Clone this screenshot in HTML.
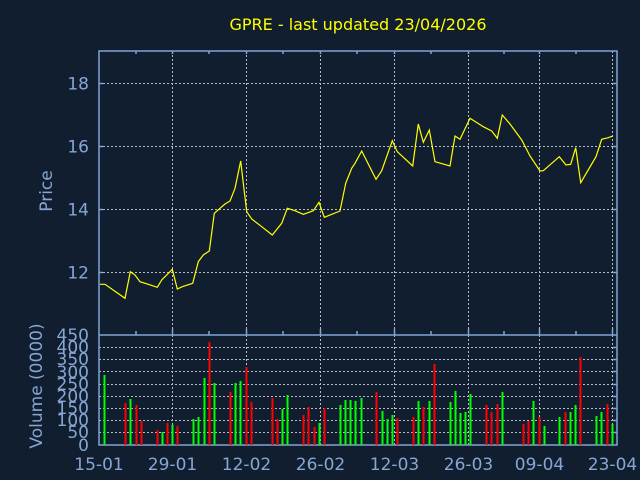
<!DOCTYPE html>
<html><head><meta charset="utf-8"><style>
html,body{margin:0;padding:0;background:#111e2f;}
svg{display:block;}
text{font-family:"DejaVu Sans","Liberation Sans",sans-serif;}
</style></head><body>
<svg width="640" height="480" viewBox="0 0 640 480" xmlns="http://www.w3.org/2000/svg">
<rect width="640" height="480" fill="#111e2f"/>
<text x="358" y="30" fill="#ffff00" font-size="16" text-anchor="middle">GPRE - last updated 23/04/2026</text>
<g stroke="#b8bcc4" stroke-width="1" stroke-dasharray="2,2" fill="none">
<path d="M99 83.5H617M99 146.5H617M99 209.5H617M99 272.5H617"/>
<path d="M172.5 51V445M246.5 51V445M320.5 51V445M394.5 51V445M468.5 51V445M539.5 51V445M612.5 51V445"/>
<path d="M99 347.5H617M99 359.5H617M99 371.5H617M99 384.5H617M99 396.5H617M99 408.5H617M99 420.5H617M99 432.5H617"/>
</g>
<g stroke="#7fa3d6" stroke-width="1.5" fill="none">
<rect x="99" y="51" width="518" height="394"/>
<path d="M99 335H617"/>
<path d="M136 51v3M209 51v3M283 51v3M357 51v3M431 51v3M504 51v3M576 51v3M172.5 51v3M246.5 51v3M320.5 51v3M394.5 51v3M468.5 51v3M539.5 51v3"/>
<path d="M136 335v-4M209 335v-4M283 335v-4M357 335v-4M431 335v-4M504 335v-4M576 335v-4M172.5 335v-6M246.5 335v-6M320.5 335v-6M394.5 335v-6M468.5 335v-6M539.5 335v-6M612.5 335v-6"/>
<path d="M99 83.5h4M99 146.5h4M99 209.5h4M99 272.5h4M613 83.5h4M613 146.5h4M613 209.5h4M613 272.5h4"/>
<path d="M613 347.5h4M613 359.5h4M613 371.5h4M613 384.5h4M613 396.5h4M613 408.5h4M613 420.5h4M613 432.5h4"/>
</g>
<polyline fill="none" stroke="#ffff00" stroke-width="1.2" points="100,284.3 105,284.3 125,298.3 130.3,271.7 135,275 140,281.7 148.3,284.3 157.3,287.3 161.7,280 172.3,269.3 177.3,289 182.3,286.7 192.7,283.3 198.3,261.7 203.3,255 209.3,251 214.3,213.3 220,208.3 225,204 230,201 235,188.3 240.7,161 243.3,183.3 246.7,211.7 251.7,219 261.7,226.7 272.3,235 281.7,223.3 287.3,208.3 295,210.7 303.3,214.3 313.3,210.7 319,202.3 324.3,217.3 340,211 345.7,183.3 351.7,168.3 355,163.3 361.7,151 376,179.3 381.7,170.7 392.3,140.7 397.3,151.7 412.7,166 418.3,124 423.3,142.3 429.3,130 435,161.7 450,166 455,136 460,139.3 470,118.3 483.3,126.7 491.7,131 497.3,138.3 502.3,115 510,124 521.7,140 530,156 540,171 543.3,170.7 559.3,156.7 566,165 570.7,164.3 575.7,147.7 580.7,182.7 596,156.7 601.7,139.3 608.3,137.7 612.7,136"/>
<g stroke-width="2">
<g stroke="#00ff00">
<path d="M104.5 445V375M130.5 445V399M162.5 445V432M172.5 445V425M193.5 445V419M198.5 445V417M204.5 445V378M214.5 445V383M235.5 445V383M240.5 445V381M282.5 445V409M287.5 445V395M319.5 445V423M340.5 445V405M345.5 445V400M350.5 445V400M355.5 445V401M361.5 445V398M382.5 445V411M387.5 445V419M392.5 445V415M418.5 445V401M429.5 445V401M450.5 445V402M455.5 445V391M460.5 445V413M465.5 445V412M470.5 445V394M502.5 445V392M533.5 445V401M544.5 445V426M559.5 445V417M570.5 445V412M575.5 445V405M596.5 445V416M601.5 445V412M612.5 445V424"/>
</g>
<g stroke="#ff0000">
<path d="M125.5 445V403M136.5 445V405M141.5 445V421M157.5 445V430M167.5 445V423M177.5 445V426M209.5 445V342M230.5 445V392M246.5 445V367M251.5 445V402M272.5 445V398M277.5 445V419M303.5 445V415M308.5 445V407M314.5 445V427M324.5 445V408M376.5 445V392M397.5 445V418M413.5 445V417M423.5 445V407M434.5 445V364M486.5 445V405M491.5 445V412M497.5 445V404M523.5 445V424M528.5 445V421M539.5 445V417M565.5 445V412M580.5 445V357M607.5 445V404"/>
</g>
</g>
<g fill="#86a6d4" font-size="17" text-anchor="end">
<text x="89" y="89.5">18</text>
<text x="89" y="152.5">16</text>
<text x="89" y="215.5">14</text>
<text x="89" y="278.5">12</text>
<text x="89" y="341">450</text>
<text x="89" y="353">400</text>
<text x="89" y="365">350</text>
<text x="89" y="378">300</text>
<text x="89" y="390">250</text>
<text x="89" y="402">200</text>
<text x="89" y="414">150</text>
<text x="89" y="426">100</text>
<text x="89" y="438">50</text>
<text x="89" y="451">0</text>
</g>
<g fill="#86a6d4" font-size="17" text-anchor="middle">
<text x="99" y="470">15-01</text>
<text x="172.5" y="470">29-01</text>
<text x="246.5" y="470">12-02</text>
<text x="320.5" y="470">26-02</text>
<text x="394.5" y="470">12-03</text>
<text x="468.5" y="470">26-03</text>
<text x="539.5" y="470">09-04</text>
<text x="612.5" y="470">23-04</text>
<text transform="translate(52,191) rotate(-90)">Price</text>
<text transform="translate(42,386) rotate(-90)">Volume (0000)</text>
</g>
</svg>
</body></html>
